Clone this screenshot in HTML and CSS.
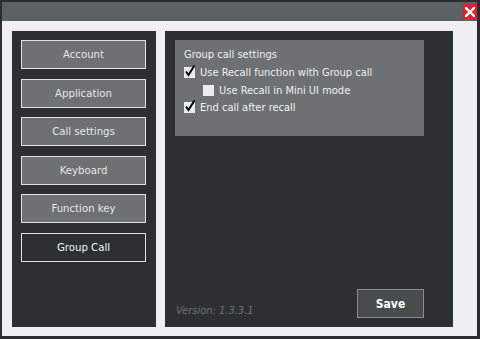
FILE: index.html
```html
<!DOCTYPE html>
<html lang="en">
<head>
    <meta charset="UTF-8">
    <title>Settings</title>
    <link rel="stylesheet" href="styles.css">
</head>
<body>
    <div class="window">
        <div class="titlebar">
            <button class="close-btn" aria-label="Close">
                <svg width="10" height="10" viewBox="0 0 10 10">
                    <path d="M1 1 L9 9 M9 1 L1 9" stroke="#fff" stroke-width="2.4" stroke-linecap="square"/>
                </svg>
            </button>
        </div>
        <div class="content">
            <div class="menu">
                <button class="menu-btn">Account</button>
                <button class="menu-btn">Application</button>
                <button class="menu-btn">Call settings</button>
                <button class="menu-btn">Keyboard</button>
                <button class="menu-btn">Function key</button>
                <button class="menu-btn active">Group Call</button>
            </div>
            <div class="panel">
                <div class="group">
                    <div class="group-title">Group call settings</div>
                    <label class="check-row">
                        <span class="box checked"><svg width="12" height="12" viewBox="0 0 12 12"><path d="M2 6.5 L4.5 10 L10.5 0.5" fill="none" stroke="#000" stroke-width="2"/></svg></span>
                        Use Recall function with Group call
                    </label>
                    <label class="check-row sub">
                        <span class="box"></span>
                        Use Recall in Mini UI mode
                    </label>
                    <label class="check-row">
                        <span class="box checked"><svg width="12" height="12" viewBox="0 0 12 12"><path d="M2 6.5 L4.5 10 L10.5 0.5" fill="none" stroke="#000" stroke-width="2"/></svg></span>
                        End call after recall
                    </label>
                </div>
                <div class="footer">
                    <span class="version">Version: 1.3.3.1</span>
                    <button class="save-btn">Save</button>
                </div>
            </div>
        </div>
    </div>
</body>
</html>
```

FILE: styles.css
```css
* {
    box-sizing: border-box;
    margin: 0;
    padding: 0;
}

body {
    width: 480px;
    height: 339px;
    background-color: #2b2e31;
    font-family: "DejaVu Sans Condensed", "DejaVu Sans", Verdana, sans-serif;
    font-size: 11px;
    overflow: hidden;
}

.window {
    padding: 2px 3px 3px 2px;
    height: 339px;
    display: flex;
    flex-direction: column;
}

.titlebar {
    height: 19px;
    background-color: #5c6163;
    display: flex;
    justify-content: flex-end;
    align-items: flex-start;
    padding-top: 2px;
}

.close-btn {
    width: 14px;
    height: 15px;
    background-color: #e0222b;
    border: none;
    display: flex;
    align-items: center;
    justify-content: center;
}

.content {
    flex: 1;
    background-color: #f0f0f2;
    padding: 10px 0 9px 10px;
    display: flex;
    gap: 9px;
}

.menu {
    width: 144px;
    background-color: #2d3033;
    padding: 9px 0 0 9px;
    display: flex;
    flex-direction: column;
    gap: 9.5px;
}

.menu-btn {
    width: 125px;
    height: 29px;
    background-color: #6d7174;
    border: 1px solid #e2e2e2;
    color: #e6e6e6;
    font-family: inherit;
    font-size: 11.3px;
}

.menu-btn.active {
    background-color: #2d3033;
    color: #f2f2f2;
}

.panel {
    width: 288px;
    background-color: #2d3033;
    padding: 9px 0 0 10px;
    display: flex;
    flex-direction: column;
}

.group {
    width: 249px;
    height: 96px;
    background-color: #6d7174;
    padding: 6px 0 0 9px;
    color: #f0f0f0;
    font-size: 11px;
}

.group-title {
    height: 18px;
    line-height: 18px;
}

.check-row {
    display: flex;
    align-items: center;
    gap: 5px;
    height: 17.5px;
}

.check-row.sub {
    padding-left: 19px;
}

.box {
    width: 11px;
    height: 11px;
    background-color: #ececec;
    position: relative;
    flex-shrink: 0;
}

.box svg {
    position: absolute;
    left: 0;
    top: -2px;
}

.footer {
    margin-top: auto;
    height: 58px;
    display: flex;
    align-items: flex-end;
    justify-content: space-between;
    padding: 0 29px 9px 1px;
}

.version {
    color: #6c7174;
    font-style: italic;
    font-size: 11px;
    padding-bottom: 1px;
}

.save-btn {
    width: 67px;
    height: 29px;
    background-color: #484c4f;
    border: 1px solid #8a8d90;
    color: #fff;
    font-family: inherit;
    font-weight: bold;
    font-size: 12px;
}
```
